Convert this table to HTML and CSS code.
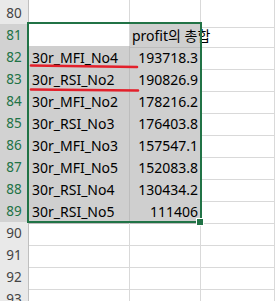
FILE: index.html
```html
<!DOCTYPE html>
<html lang="ko">
<head>
<meta charset="utf-8">
<link rel="stylesheet" href="styles.css">
</head>
<body>
<div class="sheet">
  <div class="row first"><div class="hd">80</div><div class="c a"></div><div class="c b"></div><div class="c cc"></div></div>
  <div class="row sel-row"><div class="hd">81</div><div class="c a active"></div><div class="c b g head">profit의 총합</div><div class="c cc"></div></div>
  <div class="row sel-row"><div class="hd">82</div><div class="c a g">30r_MFI_No4</div><div class="c b g num">193718.3</div><div class="c cc"></div></div>
  <div class="row sel-row"><div class="hd">83</div><div class="c a g">30r_RSI_No2</div><div class="c b g num">190826.9</div><div class="c cc"></div></div>
  <div class="row sel-row"><div class="hd">84</div><div class="c a g">30r_MFI_No2</div><div class="c b g num">178216.2</div><div class="c cc"></div></div>
  <div class="row sel-row"><div class="hd">85</div><div class="c a g">30r_RSI_No3</div><div class="c b g num">176403.8</div><div class="c cc"></div></div>
  <div class="row sel-row"><div class="hd">86</div><div class="c a g">30r_MFI_No3</div><div class="c b g num">157547.1</div><div class="c cc"></div></div>
  <div class="row sel-row"><div class="hd">87</div><div class="c a g">30r_MFI_No5</div><div class="c b g num">152083.8</div><div class="c cc"></div></div>
  <div class="row sel-row"><div class="hd">88</div><div class="c a g">30r_RSI_No4</div><div class="c b g num">130434.2</div><div class="c cc"></div></div>
  <div class="row sel-row"><div class="hd">89</div><div class="c a g">30r_RSI_No5</div><div class="c b g num">111406</div><div class="c cc"></div></div>
  <div class="row"><div class="hd">90</div><div class="c a"></div><div class="c b"></div><div class="c cc"></div></div>
  <div class="row"><div class="hd">91</div><div class="c a"></div><div class="c b"></div><div class="c cc"></div></div>
  <div class="row"><div class="hd">92</div><div class="c a"></div><div class="c b"></div><div class="c cc"></div></div>
  <div class="row"><div class="hd">93</div><div class="c a"></div><div class="c b"></div><div class="c cc"></div></div>

  <div class="selection"></div>
  <div class="handle"></div>
  <svg class="marks" width="275" height="301" viewBox="0 0 275 301">
    <line x1="31" y1="65.5" x2="137" y2="67" stroke="#e3202b" stroke-width="2.6" stroke-linecap="round"/>
    <line x1="31" y1="89.5" x2="138" y2="90.5" stroke="#e3202b" stroke-width="2.6" stroke-linecap="round"/>
  </svg>
</div>
</body>
</html>
```
FILE: styles.css
```css
html, body {
  margin: 0;
  padding: 0;
  background: #ffffff;
}
.sheet {
  position: relative;
  width: 275px;
  height: 301px;
  overflow: hidden;
  font-family: "Noto Sans", "Noto Sans CJK KR", sans-serif;
  font-size: 14px;
  color: #000;
}
.row {
  display: grid;
  grid-template-columns: 29px 101px 71px 74px;
  height: 22px;
}
.row.first {
  height: 24px;
}
.row > div {
  box-sizing: border-box;
  border-bottom: 1px solid #d9d9d9;
  border-right: 1px solid #d9d9d9;
  line-height: 23px;
  white-space: nowrap;
}
.row.first > div {
  line-height: 27px;
}
.hd {
  background: #e9e9e9;
  color: #444444;
  font-size: 13.5px;
  text-align: center;
  border-right-color: #bfbfbf !important;
  border-bottom-color: #cfcfcf !important;
}
.sel-row .hd {
  background: #d2d2d2;
  color: #217346;
  border-right: 1px solid #217346 !important;
  border-bottom-color: #bdbdbd !important;
}
.c {
  padding: 0 2px 0 3px;
}
.g {
  background: #cfcfcf;
  border-bottom-color: #bdbdbd !important;
  border-right-color: #bdbdbd !important;
}
.active {
  background: #ffffff;
}
.num {
  text-align: right;
  padding-right: 2px;
}
.head {
  overflow: visible;
  padding-left: 2px;
  position: relative;
  z-index: 1;
}
.selection {
  position: absolute;
  left: 27px;
  top: 22px;
  width: 175px;
  height: 201px;
  box-sizing: border-box;
  border: 2px solid #217346;
  z-index: 2;
}
.handle {
  position: absolute;
  left: 197px;
  top: 219px;
  width: 6px;
  height: 6px;
  background: #217346;
  outline: 1px solid #ffffff;
  z-index: 3;
}
.marks {
  position: absolute;
  left: 0;
  top: 0;
  z-index: 4;
  pointer-events: none;
}
```
